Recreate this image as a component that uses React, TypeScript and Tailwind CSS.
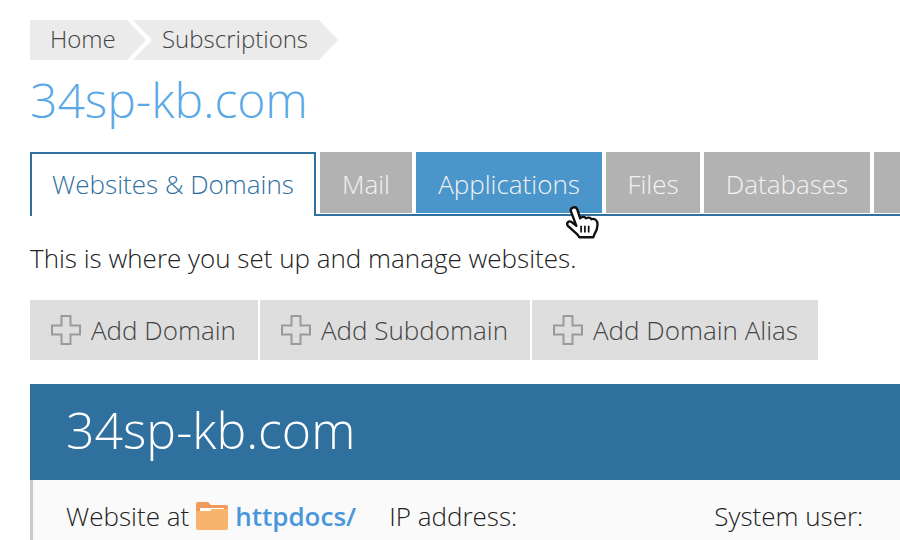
const font = "font-['Open_Sans',sans-serif]";

function Plus() {
  return (
    <svg width="30" height="30" viewBox="0 0 30 30" className="shrink-0">
      <path d="M10.500 1h9v9.500H29v9h-9.500V29h-9v-9.500H1v-9h9.500z" fill="none" stroke="#9a9a9a" strokeWidth="2" />
    </svg>
  );
}

function Folder() {
  return (
    <svg width="32" height="28" viewBox="0 0 32 28" className="shrink-0">
      <path d="M0 2a2 2 0 0 1 2-2h10l3 3h15a2 2 0 0 1 2 2v6H0z" fill="#ef9a5d" />
      <path d="M4 6h24v4H4z" fill="#fff" />
      <path d="M0 9h14l2-2h16v19a2 2 0 0 1-2 2H2a2 2 0 0 1-2-2z" fill="#f7b46d" />
    </svg>
  );
}

function Hand() {
  return (
    <svg width="36" height="40" viewBox="0 0 38 38" className="absolute left-[565px] top-[203px]">
      <path
        d="M6 6c0-4 6-5 7-1l3 9c2-2 5-2 6 0 2-1 5-1 6 1 2-1 5 0 6 3 1 5-1 10-3 13l-1 3H15l-2-3-10-9c-2-3 1-6 4-4l5 4z"
        fill="#fff"
        stroke="#111"
        strokeWidth="2.500"
        strokeLinejoin="round"
      />
      <path d="M17 22v7M21 22v7M25 22v7" stroke="#111" strokeWidth="1.800" fill="none" />
    </svg>
  );
}

const tabs = [
  { label: "Mail", w: "w-[92px]", bg: "bg-[#b2b2b2]" },
  { label: "Applications", w: "w-[186px]", bg: "bg-[#4a96cb]" },
  { label: "Files", w: "w-[94px]", bg: "bg-[#b2b2b2]" },
  { label: "Databases", w: "w-[166px]", bg: "bg-[#b2b2b2]" },
  { label: "", w: "w-[60px]", bg: "bg-[#b2b2b2]" },
];

const actions = [
  { label: "Add Domain", w: "w-[228px]" },
  { label: "Add Subdomain", w: "w-[270px]" },
  { label: "Add Domain Alias", w: "w-[286px]" },
];

export default function App() {
  return (
    <div className={`${font} relative w-[900px] h-[540px] overflow-hidden bg-white pl-[30px] pt-5 font-light text-[#333]`}>
      <div className="flex h-10 text-[24px] leading-[38px] text-[#444]">
        <div className="w-[116px] pl-5 bg-[#ebebeb] [clip-path:polygon(0_0,97px_0,116px_20px,97px_40px,0_40px)]">Home</div>
        <div className="-ml-[13px] w-[205px] pl-[29px] bg-[#ebebeb] [clip-path:polygon(0_0,186px_0,205px_20px,186px_40px,0_40px,19px_20px)]">Subscriptions</div>
      </div>

      <h1 className="mt-[7px] h-[85px] text-[48px] leading-[66px] font-light text-[#5aa9e6]">34sp-kb.com</h1>

      <div className="flex w-[870px] h-16 gap-1 overflow-hidden">
        <div className="w-[286px] h-16 shrink-0 border-2 border-b-0 border-[#30709f] text-center text-[26px] leading-[60px] text-[#30709f]">Websites &amp; Domains</div>
        <div className="flex-1 flex gap-1 -ml-1 pl-1 border-b-2 border-[#30709f] h-16 overflow-hidden">
          {tabs.map((t, i) => (
            <div key={i} className={`${t.w} ${t.bg} h-[61px] shrink-0 text-center text-[26px] leading-[64px] text-[#f2f2f2]`}>{t.label}</div>
          ))}
        </div>
      </div>

      <p className="mt-[24px] mb-[24px] h-9 text-[26px] leading-9 font-light text-[#222]">This is where you set up and manage websites.</p>

      <div className="flex gap-0.5">
        {actions.map((a) => (
          <div key={a.label} className={`${a.w} h-[60px] flex items-center gap-[10px] pl-[21px] bg-[#dedede] text-[26px] text-[#444]`}>
            <Plus />
            <span>{a.label}</span>
          </div>
        ))}
      </div>

      <div className="mt-6 h-24 bg-[#30709f] pl-9 text-[50px] leading-[92px] text-white -mr-[30px]">34sp-kb.com</div>

      <div className="h-[60px] bg-[#fafafa] border-l-[3px] border-[#c9c9c9] pl-[33px] pt-[14px] flex items-start text-[26px] leading-[44px] text-[#222] -mr-[30px]">
        <span>Website at</span>
        <span className="ml-[7px] mt-2"><Folder /></span>
        <span className="ml-[7px] font-semibold text-[#4a96dc]">httpdocs/</span>
        <span className="ml-[33px]">IP address:</span>
        <span className="ml-[197px]">System user:</span>
      </div>

      <Hand />
    </div>
  );
}
